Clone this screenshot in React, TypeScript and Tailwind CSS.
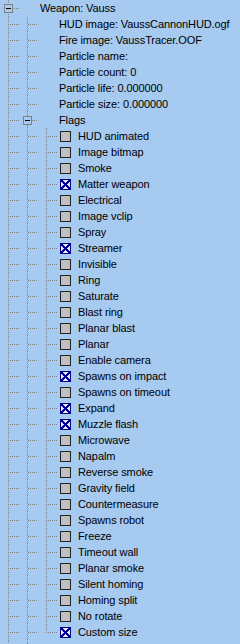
import React from "react";

type CellType = "full" | "tee" | "ell";
type Row = {
  label: string;
  cells: CellType[];
  box?: boolean;
  check?: "on" | "off";
};

const DOT = "#808080";

function GuideCell({ type, col, row, box }: { type: CellType; col: number; row: number; box?: boolean }) {
  const x0 = col * 19;
  const y0 = row * 16;
  const rects: React.ReactNode[] = [];
  const vEnd = type === "ell" ? 9 : 16;
  for (let y = 0; y < vEnd; y++) {
    if (box && y >= 4 && y <= 12) continue;
    if ((x0 + 8 + y0 + y) % 2 === 0) rects.push(<rect key={"v" + y} x={8} y={y} width={1} height={1} fill={DOT} />);
  }
  const hStart = box ? 13 : 9;
  for (let x = hStart; x < 19; x++) {
    if ((x0 + x + y0 + 8) % 2 === 0) rects.push(<rect key={"h" + x} x={x} y={8} width={1} height={1} fill={DOT} />);
  }
  return (
    <svg width={19} height={16} className="shrink-0 block" shapeRendering="crispEdges">
      {rects}
      {box && (
        <g>
          <rect x={4.5} y={4.5} width={8} height={8} fill="none" stroke="#808080" strokeWidth={1} />
          <rect x={6} y={8} width={5} height={1} fill="#000000" />
        </g>
      )}
    </svg>
  );
}

function CheckBox({ on }: { on: boolean }) {
  if (!on) {
    return (
      <svg width={11} height={11} className="block" shapeRendering="crispEdges">
        <rect x={0} y={0} width={11} height={11} fill="#202020" />
        <rect x={1} y={1} width={9} height={9} fill="#c0c0c0" />
      </svg>
    );
  }
  const X = "#0000a0";
  return (
    <svg width={11} height={11} className="block" shapeRendering="crispEdges">
      <rect x={0} y={0} width={11} height={11} fill="#000080" />
      <rect x={1} y={1} width={9} height={9} fill="#e8e8ff" />
      <rect x={1} y={1} width={2} height={2} fill={X} />
      <rect x={2} y={2} width={2} height={2} fill={X} />
      <rect x={3} y={3} width={2} height={2} fill={X} />
      <rect x={4} y={4} width={3} height={3} fill={X} />
      <rect x={6} y={6} width={2} height={2} fill={X} />
      <rect x={7} y={7} width={2} height={2} fill={X} />
      <rect x={8} y={8} width={2} height={2} fill={X} />
      <rect x={8} y={1} width={2} height={2} fill={X} />
      <rect x={7} y={2} width={2} height={2} fill={X} />
      <rect x={6} y={3} width={2} height={2} fill={X} />
      <rect x={3} y={6} width={2} height={2} fill={X} />
      <rect x={2} y={7} width={2} height={2} fill={X} />
      <rect x={1} y={8} width={2} height={2} fill={X} />
    </svg>
  );
}

const flags: [string, boolean][] = [
  ["HUD animated", false],
  ["Image bitmap", false],
  ["Smoke", false],
  ["Matter weapon", true],
  ["Electrical", false],
  ["Image vclip", false],
  ["Spray", false],
  ["Streamer", true],
  ["Invisible", false],
  ["Ring", false],
  ["Saturate", false],
  ["Blast ring", false],
  ["Planar blast", false],
  ["Planar", false],
  ["Enable camera", false],
  ["Spawns on impact", true],
  ["Spawns on timeout", false],
  ["Expand", true],
  ["Muzzle flash", true],
  ["Microwave", false],
  ["Napalm", false],
  ["Reverse smoke", false],
  ["Gravity field", false],
  ["Countermeasure", false],
  ["Spawns robot", false],
  ["Freeze", false],
  ["Timeout wall", false],
  ["Planar smoke", false],
  ["Silent homing", false],
  ["Homing split", false],
  ["No rotate", false],
  ["Custom size", true],
];

const rows: Row[] = [
  { label: "Weapon: Vauss", cells: ["full"], box: true },
  { label: "HUD image: VaussCannonHUD.ogf", cells: ["full", "tee"] },
  { label: "Fire image: VaussTracer.OOF", cells: ["full", "tee"] },
  { label: "Particle name:", cells: ["full", "tee"] },
  { label: "Particle count: 0", cells: ["full", "tee"] },
  { label: "Particle life: 0.000000", cells: ["full", "tee"] },
  { label: "Particle size: 0.000000", cells: ["full", "tee"] },
  { label: "Flags", cells: ["full", "tee"], box: true },
  ...flags.map(([label, on], i) => ({
    label,
    cells: ["full", "full", i === flags.length - 1 ? "ell" : "tee"] as CellType[],
    check: (on ? "on" : "off") as "on" | "off",
  })),
  { label: "Sparks count: 0", cells: ["full", "tee"] },
];

export default function App() {
  return (
    <div
      className="w-[240px] h-[644px] overflow-hidden bg-[#a6caf0] text-black text-[11px] leading-[16px]"
      style={{ fontFamily: '"Liberation Sans", Arial, sans-serif' }}
    >
      {rows.map((r, ri) => (
        <div key={ri} className="flex h-[16px] items-center whitespace-nowrap">
          {r.cells.map((c, ci) => (
            <GuideCell key={ci} type={c} col={ci} row={ri} box={r.box && ci === r.cells.length - 1} />
          ))}
          {r.check ? (
            <div className="flex items-center pl-[3px] pr-[7px]">
              <CheckBox on={r.check === "on"} />
            </div>
          ) : (
            <div className="w-[21px] shrink-0" />
          )}
          <span className="tracking-[-0.1px]">{r.label}</span>
        </div>
      ))}
    </div>
  );
}
